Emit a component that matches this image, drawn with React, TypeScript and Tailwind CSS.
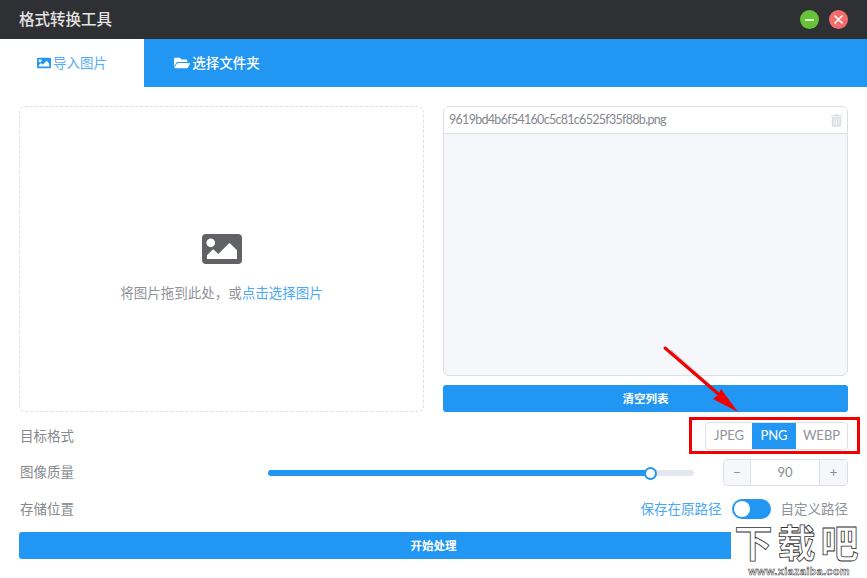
import { FaImage, FaFolderOpen, FaTrashAlt } from 'react-icons/fa';

const font = "font-['Lato','Noto_Sans_CJK_SC',sans-serif]";

const formats = [
  { name: 'JPEG', width: 'w-[46px]' },
  { name: 'PNG', width: 'w-[44px]' },
  { name: 'WEBP', width: 'flex-1' },
];

export default function App() {
  return (
    <div className={`relative w-[867px] h-[578px] overflow-hidden bg-white ${font}`}>
      {/* Title bar */}
      <header className="h-[39px] bg-[#2f3033] flex items-center justify-between pl-[19px] pr-[19px]">
        <span className="text-[15.5px] font-medium text-[#e4e4e4]">格式转换工具</span>
        <div className="flex items-center gap-[10px]">
          <button className="w-[19px] h-[19px] rounded-full bg-[#67c23a] flex items-center justify-center">
            <span className="block w-[9px] h-[2px] bg-[#d9f0cc]" />
          </button>
          <button className="w-[19px] h-[19px] rounded-full bg-[#f56c6c] flex items-center justify-center">
            <svg width="9" height="9" viewBox="0 0 9 9" stroke="#fff" strokeWidth="1.6" strokeLinecap="round">
              <path d="M1 1l7 7M8 1L1 8" />
            </svg>
          </button>
        </div>
      </header>

      {/* Tabs */}
      <nav className="h-[48px] bg-[#2196f3] flex text-[13.5px]">
        <div className="w-[144px] bg-white text-[#55adf5] flex items-center justify-center gap-[2px]">
          <FaImage className="w-[14px] h-[14px] text-[#2196f3]" />
          <span>导入图片</span>
        </div>
        <div className="w-[146px] text-white flex items-center justify-center gap-[2px] font-medium">
          <FaFolderOpen className="w-[16px] h-[16px]" />
          <span>选择文件夹</span>
        </div>
      </nav>

      <main className="px-[19px] pt-[19px]">
        <section className="grid grid-cols-[405px_405px] gap-[19px]">
          {/* Drop zone */}
          <div className="h-[306px] rounded-[6px] border border-dashed border-[#dcdfe6] flex flex-col items-center pt-[122px]">
            <FaImage className="w-[40px] h-[40px] text-[#606266]" />
            <p className="mt-[14px] text-[13.5px] text-[#909399]">
              将图片拖到此处，或<span className="text-[#4aa8f4]">点击选择图片</span>
            </p>
          </div>

          {/* File list */}
          <div className="flex flex-col gap-[9px]">
            <div className="h-[270px] rounded-[6px] border border-[#dcdfe6] bg-[#f5f7fa] overflow-hidden">
              <div className="h-[27px] bg-white border-b border-[#dcdfe6] flex items-center justify-between pl-[5px] pr-[5px]">
                <span className="text-[12.5px] text-[#85888d] tracking-[-0.7px]">9619bd4b6f54160c5c81c6525f35f88b.png</span>
                <FaTrashAlt className="w-[11px] h-[13px] text-[#dcdfe6]" />
              </div>
            </div>
            <button className="h-[27px] rounded-[3px] bg-[#2196f3] text-white text-[11.5px] font-bold">清空列表</button>
          </div>
        </section>

        {/* Target format */}
        <div className="h-[28px] mt-[10px] flex items-center justify-between">
          <span className="pl-px text-[13.5px] text-[#85888d]">目标格式</span>
          <div className="flex h-[28px] w-[143px] rounded-[4px] border border-[#dcdfe6] overflow-hidden text-[13px] text-[#909399]">
            {formats.map((f) => (
              <span
                key={f.name}
                className={`${f.width} flex items-center justify-center ${f.name === 'PNG' ? 'bg-[#2196f3] text-white' : ''}`}
              >
                {f.name}
              </span>
            ))}
          </div>
        </div>

        {/* Quality */}
        <div className="h-[27px] mt-[9px] flex items-center">
          <span className="pl-px text-[13.5px] text-[#85888d] w-[249px]">图像质量</span>
          <div className="relative w-[426px] h-[6px] rounded-full bg-[#e4e7ed]">
            <div className="h-full w-[383px] rounded-full bg-[#2196f3]" />
            <div className="absolute left-[376px] top-[-3px] w-[13px] h-[13px] rounded-full bg-white border-2 border-[#2196f3]" />
          </div>
          <div className="ml-[29px] w-[125px] h-[27px] rounded-[4px] border border-[#dcdfe6] flex text-[13px] text-[#8a8d93]">
            <span className="w-[27px] bg-[#f5f7fa] border-r border-[#dcdfe6] rounded-l-[4px] flex items-center justify-center">−</span>
            <span className="flex-1 flex items-center justify-center">90</span>
            <span className="w-[28px] bg-[#f5f7fa] border-l border-[#dcdfe6] rounded-r-[4px] flex items-center justify-center">+</span>
          </div>
        </div>

        {/* Save location */}
        <div className="h-[20px] mt-[13px] flex items-center">
          <span className="pl-px text-[13.5px] text-[#85888d]">存储位置</span>
          <div className="ml-auto flex items-center text-[13.5px]">
            <span className="text-[#4aa8f4]">保存在原路径</span>
            <span className="relative mx-[10px] w-[39px] h-[20px] rounded-full bg-[#2196f3]">
              <span className="absolute left-[2px] top-[2px] w-[16px] h-[16px] rounded-full bg-white" />
            </span>
            <span className="text-[#909399]">自定义路径</span>
          </div>
        </div>

        <button className="mt-[13px] w-full h-[27px] rounded-[3px] bg-[#2196f3] text-white text-[11.5px] font-bold pt-[1px]">开始处理</button>
      </main>

      {/* Annotation: red box and arrow */}
      <div className="absolute left-[689px] top-[417px] w-[171px] h-[37px] border-[3px] border-[#f00000]" />
      <svg className="absolute left-[655px] top-[340px] pointer-events-none" width="95" height="80" viewBox="0 0 95 80">
        <path d="M12 8L66 56" stroke="#777" strokeWidth="4" opacity="0.35" transform="translate(3 3)" />
        <path d="M86 74L66 52L62 60Z" fill="#777" opacity="0.35" />
        <path d="M10 8L68 58" stroke="#f00000" strokeWidth="3" strokeLinecap="round" />
        <path d="M83 72L66 49L63 55L58 59Z" fill="#f00000" />
      </svg>

      {/* Watermark */}
      <div className="absolute left-[731px] top-[520px] w-[136px] h-[58px] bg-white flex flex-col items-center">
        <div className="text-[38px] leading-[45px] font-bold tracking-[5px] text-white [-webkit-text-stroke:0.8px_#333] whitespace-nowrap">下载吧</div>
        <div className="font-['Liberation_Sans',sans-serif] text-[11px] leading-[13px] font-bold tracking-[0.3px] text-white [-webkit-text-stroke:0.5px_#444]">www.xiazaiba.com</div>
      </div>
    </div>
  );
}
